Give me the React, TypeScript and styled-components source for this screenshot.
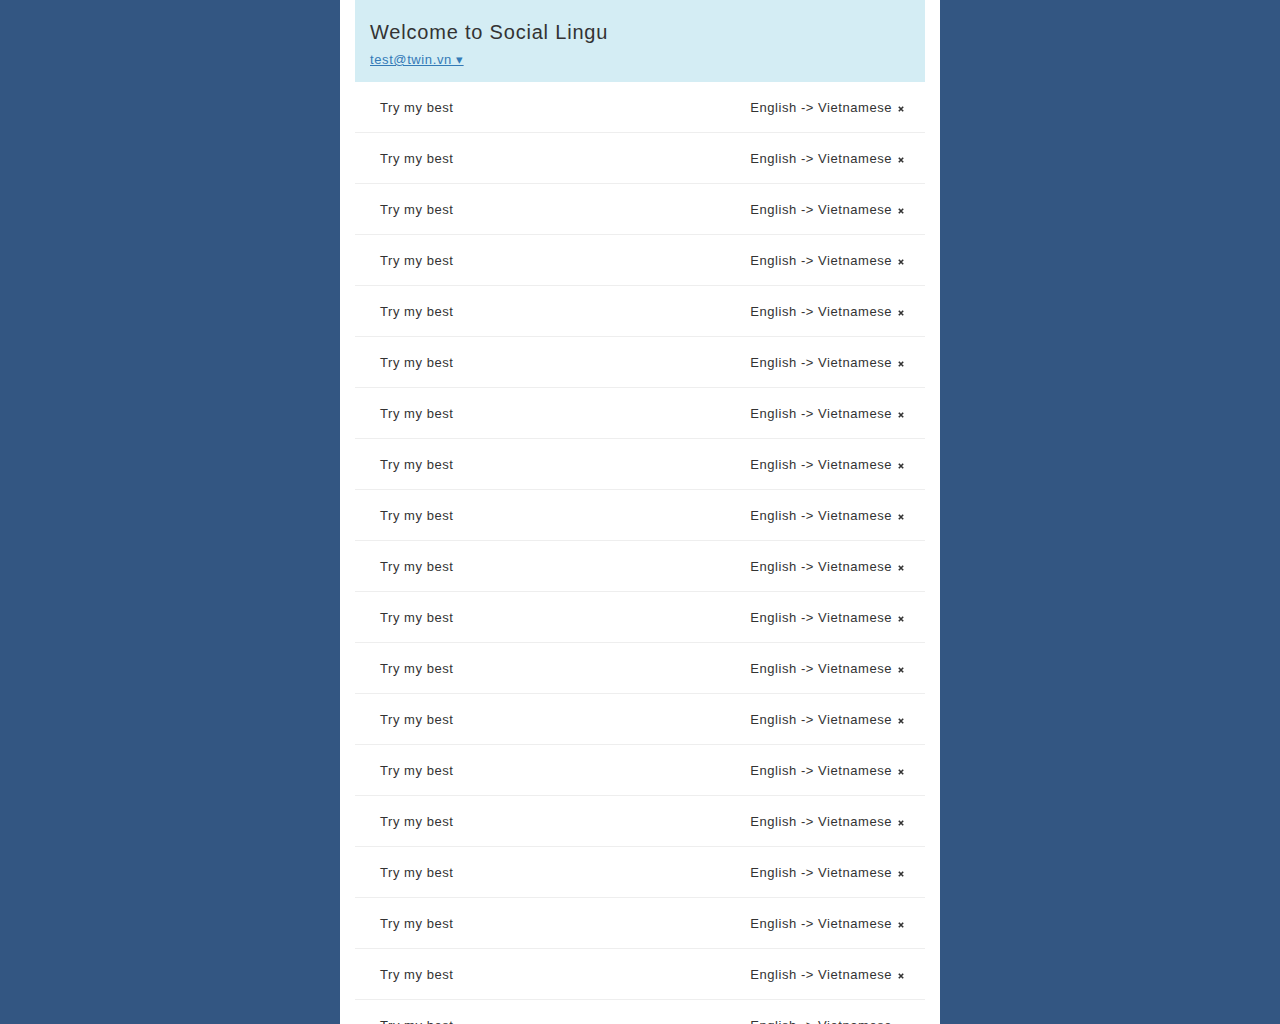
import React from "react";
import styled, { createGlobalStyle } from "styled-components";

const Global = createGlobalStyle`
  html, body { margin: 0; padding: 0; background: #335682; }
  body { font-family: "Liberation Sans", Arial, Helvetica, sans-serif; color: #333; }
`;

const Page = styled.div`
  width: 600px;
  margin: 0 auto;
  background: #fff;
  min-height: 1024px;
  padding: 0 15px;
  box-sizing: border-box;
`;

const Header = styled.header`
  background: #d4edf4;
  height: 82px;
  box-sizing: border-box;
  padding: 20px 15px 0;
`;

const Title = styled.h1`
  margin: 0;
  font-size: 20px;
  font-weight: normal;
  letter-spacing: 0.8px;
  line-height: 24px;
  color: #333;
`;

const UserLink = styled.a`
  display: inline-block;
  margin-top: 8px;
  font-size: 13px;
  letter-spacing: 0.6px;
  color: #337ab7;
  text-decoration: underline;
  line-height: 16px;
`;

const List = styled.ul`
  list-style: none;
  margin: 0;
  padding: 0;
`;

const Row = styled.li`
  height: 51px;
  box-sizing: border-box;
  border-bottom: 1px solid #eee;
  display: flex;
  align-items: center;
  justify-content: space-between;
  padding: 1px 21px 0 25px;
  font-size: 13px;
  letter-spacing: 0.55px;
  color: #333;
`;

const Right = styled.span`
  display: flex;
  align-items: center;
  gap: 6px;
`;

const Remove = styled.svg`
  width: 6px;
  height: 6px;
  margin-top: 3px;
`;

const rows = Array.from({ length: 20 }, (_, i) => i);

export default function App() {
  return (
    <>
      <Global />
      <Page>
        <Header>
          <Title>Welcome to Social Lingu</Title>
          <UserLink href="#">test@twin.vn ▾</UserLink>
        </Header>
        <List>
          {rows.map((i) => (
            <Row key={i}>
              <span>Try my best</span>
              <Right>
                English -&gt; Vietnamese
                <Remove viewBox="0 0 6 6">
                  <path d="M0.8 0.8 L5.2 5.2 M5.2 0.8 L0.8 5.2" stroke="#333" strokeWidth="1.6" />
                </Remove>
              </Right>
            </Row>
          ))}
        </List>
      </Page>
    </>
  );
}
